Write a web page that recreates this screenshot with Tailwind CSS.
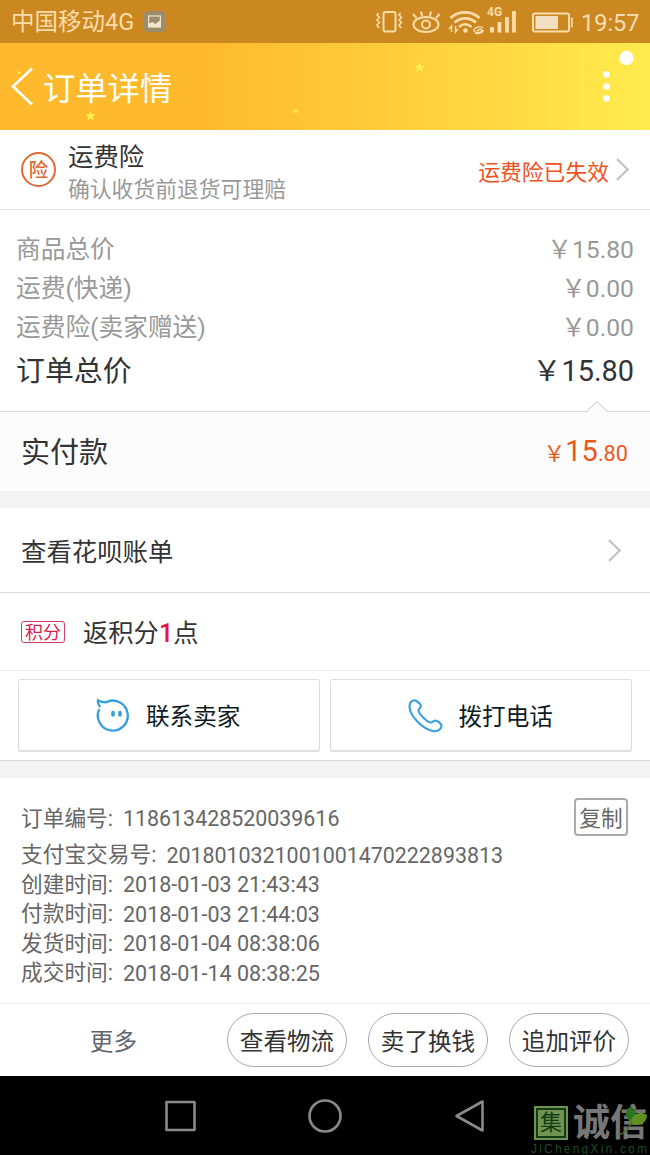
<!DOCTYPE html>
<html lang="zh-CN">
<head>
<meta charset="utf-8">
<meta name="viewport" content="width=device-width, initial-scale=1">
<title>订单详情</title>
<script src="https://cdn.jsdelivr.net/npm/@tailwindcss/browser@4"></script>
</head>
<body class="bg-white">
<div class="flex h-[1155px] w-[650px] flex-col overflow-hidden bg-white font-['Roboto','Noto_Sans_CJK_SC',sans-serif] leading-none font-normal text-[#333]">

  <!-- Status bar -->
  <div class="flex h-[43px] shrink-0 items-center bg-[#cc8820] pl-[11px] text-[#fbdcab]">
    <span class="w-[133px] pt-[3px] text-[23.500px] whitespace-nowrap">中国移动4G</span>
    <svg class="h-[21px] w-[21px]" viewBox="0 0 21 21"><rect width="21" height="21" rx="4" fill="#9a8c6c"/><rect x="4.600" y="5" width="11.800" height="11" fill="none" stroke="#f4e6cd" stroke-width="1.200"/><path d="M5 12.500l3.500-1.500 3 2 4.500-3.500V16H5z" fill="#f4e6cd"/></svg>
    <svg class="ml-[206px] h-[43px] w-[207px]" viewBox="371 0 207 43" fill="none" stroke="#fbdcab" stroke-width="2">
      <rect x="383.500" y="12" width="12" height="19.500" rx="2"/>
      <path d="M378.500 13l-1.500 2 2.500 2.500-2.500 2.500 2.500 2.500-2.500 2.500 2 3M400.500 13l-1.500 2 2.500 2.500-2.500 2.500 2.500 2.500-2.500 2.500 2 3" stroke-width="1.600"/>
      <ellipse cx="426" cy="24.500" rx="12.500" ry="7.500"/><circle cx="426" cy="24.500" r="4"/>
      <path d="M413 14l3.500 4M421 11.500l1.200 4.500M431 11.500l-1.200 4.500M439.500 14l-3.500 4"/>
      <path d="M450.500 18c8.500-7.500 20.500-7.500 29 0M454.500 22.500c6.500-5.500 15-5.500 21.500 0M459 27c4-3.500 8.500-3.500 12.500 0" stroke-width="2.600"/>
      <circle cx="465.500" cy="30.500" r="2.300" fill="#fbdcab" stroke="none"/>
      <path d="M451.500 32v-6l-2.500 3M455.500 26v6l2.500-3" stroke-width="1.500"/>
      <path d="M483 28c-2-2-9-1-9 2.500 0 3 8 2 8 0s-4-1.500-5 .5M475 33c3 1 8 .5 8.500-3" stroke-width="1.400"/>
      <path d="M492 32.500v-5.500M499.500 32.500v-10.500M507 32.500v-15.500M514 32.500v-21.500" stroke-width="3.800"/>
      <rect x="533" y="13.500" width="36" height="18" rx="2"/><path d="M570.500 18.500h1.500v8h-1.500" stroke-width="1.600"/><rect x="535.500" y="16" width="22.500" height="13" fill="#f2dec0" stroke="none"/>
      <text x="487" y="16" font-size="12" font-weight="700" fill="#fbdcab" stroke="none">4G</text>
    </svg>
    <span class="ml-[3px] pt-[4px] text-[23.500px] text-[#f6ddb5]">19:57</span>
  </div>

  <!-- Title bar -->
  <div class="relative flex h-[87px] shrink-0 items-center bg-linear-to-r from-[#ffb92c] from-30% via-[#ffd43c] via-70% to-[#ffeb4d] pl-[11px] text-white">
    <svg class="h-[39px] w-[23px]" viewBox="0 0 23 39" fill="none" stroke="#fff" stroke-width="2.600"><path d="M21 1.500L2 19.500l19 18"/></svg>
    <h1 class="ml-[9px] pt-[6px] text-[32.300px]">订单详情</h1>
    <svg class="absolute inset-0 h-[87px] w-[650px]" viewBox="0 43 650 87">
      <g fill="#fff04f">
        <path id="star" d="M90.500 111l1.400 3.300 3.600.3-2.700 2.300.9 3.500-3.200-1.900-3.200 1.900.9-3.500-2.700-2.300 3.600-.3z"/>
        <use href="#star" x="329" y="-48.500"/>
        <path d="M292.500 112l3.500-3 3 3-3 1z" opacity=".8"/>
        <path d="M17 71l4 1.500-2 2z"/>
        <circle cx="607" cy="56" r="2.500" opacity=".5"/>
      </g>
      <g fill="#fff"><circle cx="626.500" cy="58" r="7.200"/><circle cx="606.500" cy="74.500" r="3.300"/><circle cx="606.500" cy="86.500" r="3.300"/><circle cx="606.500" cy="98.500" r="3.300"/></g>
    </svg>
  </div>

  <!-- Freight insurance -->
  <div class="flex h-[80px] shrink-0 items-center border-b border-[#e4e4e4] pr-[21px] pl-[21px]">
    <div class="flex h-[35px] w-[35px] items-center justify-center rounded-full border-2 border-[#de6a35] pt-[2px] text-[19.500px] font-medium text-[#de6a35]">险</div>
    <div class="ml-[12px] flex flex-1 flex-col gap-[8px] pt-[7px]">
      <div class="text-[25.400px]">运费险</div>
      <div class="text-[21.800px] text-[#999]">确认收货前退货可理赔</div>
    </div>
    <div class="pt-[6px] text-[21.800px] text-[#ee5322]">运费险已失效</div>
    <svg class="ml-[7px] h-[23px] w-[13px]" viewBox="0 0 13 23" fill="none" stroke="#c4c4c4" stroke-width="2.300"><path d="M1 1l10.500 10.500L1 22"/></svg>
  </div>

  <!-- Price breakdown -->
  <div class="flex h-[201px] shrink-0 flex-col pt-[21px] pr-[16px] pl-[16px] text-[24.700px] text-[#999]">
    <div class="flex h-[39px] items-center justify-between"><span>商品总价</span><span>￥15.80</span></div>
    <div class="flex h-[39px] items-center justify-between"><span>运费(快递)</span><span>￥0.00</span></div>
    <div class="flex h-[39px] items-center justify-between"><span>运费险(卖家赠送)</span><span>￥0.00</span></div>
    <div class="flex h-[47px] items-center justify-between text-[28.900px] text-[#333]"><span>订单总价</span><span>￥15.80</span></div>
  </div>

  <!-- Amount paid -->
  <div class="relative flex h-[80px] shrink-0 items-center justify-between border-t border-[#d9d9d9] bg-[#fcfcfc] pr-[22px] pl-[21px]">
    <svg class="absolute -top-[12px] left-[586px] h-[13px] w-[22px]" viewBox="0 0 22 13"><path d="M0 13L11 1.500 22 13z" fill="#fcfcfc"/><path d="M0 12L11 1.500 22 12" fill="none" stroke="#d9d9d9" stroke-width="1.200"/></svg>
    <span class="pt-[4px] text-[29px]">实付款</span>
    <span class="flex items-baseline text-[#e8591c]"><span class="text-[21.700px]">￥</span><span class="text-[29px]">15</span><span class="text-[21.700px]">.80</span></span>
  </div>
  <div class="h-[17px] shrink-0 bg-[#f3f3f3]"></div>

  <!-- Huabei bill -->
  <div class="flex h-[85px] shrink-0 items-center justify-between border-b border-[#d9d9d9] pr-[29px] pl-[21px] text-[25.400px]">
    <span class="pt-[5px]">查看花呗账单</span>
    <svg class="h-[23px] w-[13px]" viewBox="0 0 13 23" fill="none" stroke="#c4c4c4" stroke-width="2.300"><path d="M1 1l10.500 10.500L1 22"/></svg>
  </div>

  <!-- Points -->
  <div class="flex h-[78px] shrink-0 items-center border-b border-[#e9e9e9] pl-[21px] text-[25.300px]">
    <span class="flex h-[22px] w-[44px] items-center justify-center rounded-[3px] border border-[#d23d62] pt-[2px] text-[18px] text-[#d81e4c]">积分</span>
    <span class="ml-[18px] pt-[5px]">返积分<span class="font-medium text-[#e0194a]">1</span>点</span>
  </div>

  <!-- Contact buttons -->
  <div class="flex h-[90px] shrink-0 gap-[10px] border-b border-[#dadada] px-[18px] pt-[8px] text-[23.600px] text-[#0d1a24]">
    <div class="flex h-[73px] flex-1 items-center rounded-[3px] border border-b-2 border-[#dedede] pl-[76px]">
      <svg class="h-[36px] w-[34px]" viewBox="0 0 34 36" fill="none" stroke="#35a0dc" stroke-width="2.300"><path d="M4.300 12A15 15 0 1 0 11 5.200Q7 5.500 3 3.200Q2.200 6 5.200 10"/><path d="M18 15.500v2.500M25 15.500v2.500" stroke-width="3.600" stroke-linecap="round"/></svg>
      <span class="ml-[17px] pt-[6px]">联系卖家</span>
    </div>
    <div class="flex h-[73px] flex-1 items-center rounded-[3px] border border-b-2 border-[#dedede] pl-[77px]">
      <svg class="h-[36px] w-[35px]" viewBox="0 0 35 36" fill="none" stroke="#35a0dc" stroke-width="2.100" stroke-linejoin="round"><path d="M5.500 3.500C8.500 2.500 12.500 7 13 9c.3 1.500-2.500 2.500-2.500 4.500 0 3 8.500 11.500 12 12 2.500.2 3-2 5-2 2 .2 6 3 6 5.500 0 3-4 5.500-7.500 5.200C14.500 33 2 18.500 1.500 10 1.500 7 3 4 5.500 3.500z"/></svg>
      <span class="ml-[16px] pt-[6px]">拨打电话</span>
    </div>
  </div>
  <div class="h-[17px] shrink-0 bg-[#f3f3f3]"></div>

  <!-- Order information -->
  <div class="flex h-[225px] shrink-0 flex-col pt-[20px] pr-[22px] pl-[21px] text-[21.700px] text-[#666]">
    <div class="flex h-[42.500px] items-start justify-between">
      <div class="flex h-[42px] items-center gap-[10px]"><span>订单编号:</span><span class="text-[21.400px]">118613428520039616</span></div>
      <div class="flex h-[38px] w-[54px] items-center justify-center rounded-[4px] border-2 border-[#aaa] pt-[4px]">复制</div>
    </div>
    <div class="flex h-[29.500px] items-center gap-[10px]"><span>支付宝交易号:</span><span class="text-[21.400px]">2018010321001001470222893813</span></div>
    <div class="flex h-[29.500px] items-center gap-[10px]"><span>创建时间:</span><span class="text-[21.500px]">2018-01-03 21:43:43</span></div>
    <div class="flex h-[29.500px] items-center gap-[10px]"><span>付款时间:</span><span class="text-[21.500px]">2018-01-03 21:44:03</span></div>
    <div class="flex h-[29.500px] items-center gap-[10px]"><span>发货时间:</span><span class="text-[21.500px]">2018-01-04 08:38:06</span></div>
    <div class="flex h-[29.500px] items-center gap-[10px]"><span>成交时间:</span><span class="text-[21.500px]">2018-01-14 08:38:25</span></div>
  </div>

  <!-- Order actions -->
  <div class="flex h-[73px] shrink-0 items-center justify-end gap-[21px] border-t border-[#efefef] pr-[21px] pb-[1px] text-[23.600px]">
    <span class="mr-[69px] pt-[6px] text-[#5f646e]">更多</span>
    <div class="flex h-[54px] w-[120px] items-center justify-center rounded-full border border-[#aaa] pt-[6px]">查看物流</div>
    <div class="flex h-[54px] w-[120px] items-center justify-center rounded-full border border-[#aaa] pt-[6px]">卖了换钱</div>
    <div class="flex h-[54px] w-[120px] items-center justify-center rounded-full border border-[#aaa] pt-[6px]">追加评价</div>
  </div>

  <!-- Android navigation bar -->
  <div class="relative h-[79px] shrink-0 bg-black">
    <svg class="h-[79px] w-[520px]" viewBox="0 1076 520 79" fill="none" stroke="#8a8a8a" stroke-width="2.600" stroke-linejoin="round"><rect x="166.500" y="1102" width="28" height="28"/><circle cx="325" cy="1116" r="15.500"/><path d="M482.500 1101.500v29L456.500 1116z"/></svg>
    <!-- Site watermark -->
    <div class="absolute top-[30px] left-[534px] flex h-[34px] items-center whitespace-nowrap">
      <div class="flex h-[34px] w-[34px] items-center justify-center bg-[#6f9350] p-[2px]"><div class="flex h-full w-full items-center justify-center border-2 border-[#143c14] text-[22px] leading-[22px] text-[#143c14]">集</div></div>
      <span class="ml-[5px] pt-px text-[37px] leading-[32px] font-bold text-[#777]">诚信</span>
    </div>
    <svg class="absolute top-[28px] left-[616px] h-[36px] w-[34px]" viewBox="0 0 34 36"><path d="M14 18C8 12 9 6 14 3c6 2 7 6 5 13z" fill="#2c7420"/><path d="M14 19c3-10 10-12 17-8 0 7-6 12-17 9z" fill="#5e9120"/><path d="M16 18Q11 28 3 31" fill="none" stroke="#47731c" stroke-width="1.500"/></svg>
    <span class="absolute top-[67px] left-[531px] font-['Liberation_Sans',sans-serif] text-[12px] leading-[12px] tracking-[2.200px] whitespace-nowrap text-[#1d4d22]">JiChengXin.com</span>
  </div>
</div>
</body>
</html>
